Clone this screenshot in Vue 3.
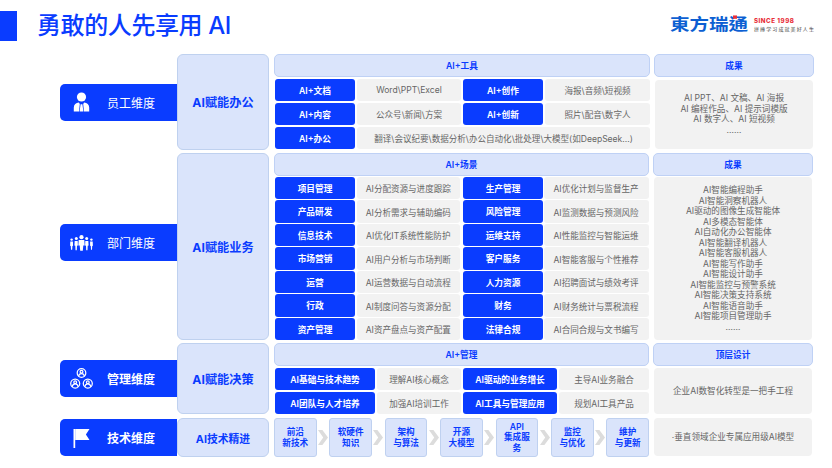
<script setup>
const toolRows = [
  { cells: [['AI+文档', 'Word\\PPT\\Excel'], ['AI+创作', '海报\\音频\\短视频']] },
  { cells: [['AI+内容', '公众号\\新闻\\方案'], ['AI+创新', '照片\\配音\\数字人']] }
]
const sceneRows = [
  ['项目管理', 'AI分配资源与进度跟踪', '生产管理', 'AI优化计划与监督生产'],
  ['产品研发', 'AI分析需求与辅助编码', '风险管理', 'AI监测数据与预测风险'],
  ['信息技术', 'AI优化IT系统性能防护', '运维支持', 'AI性能监控与智能运维'],
  ['市场营销', 'AI用户分析与市场判断', '客户服务', 'AI智能客服与个性推荐'],
  ['运营', 'AI运营数据与自动流程', '人力资源', 'AI招聘面试与绩效考评'],
  ['行政', 'AI制度问答与资源分配', '财务', 'AI财务统计与票税流程'],
  ['资产管理', 'AI资产盘点与资产配置', '法律合规', 'AI合同合规与文书编写']
]
const sceneResults = ['AI智能编程助手', 'AI智能洞察机器人', 'AI驱动的图像生成智能体', 'AI多模态智能体', 'AI自动化办公智能体', 'AI智能翻译机器人', 'AI智能客服机器人', 'AI智能写作助手', 'AI智能设计助手', 'AI智能监控与预警系统', 'AI智能决策支持系统', 'AI智能语音助手', 'AI智能项目管理助手', '……']
const toolResults = ['AI PPT、AI 文稿、AI 海报', 'AI 编程作品、AI 提示词模版', 'AI 数字人、AI 短视频', '……']
const mgmtRows = [
  ['AI基础与技术趋势', '理解AI核心概念', 'AI驱动的业务增长', '主导AI业务融合'],
  ['AI团队与人才培养', '加强AI培训工作', 'AI工具与管理应用', '规划AI工具产品']
]
const steps = [['前沿', '新技术'], ['软硬件', '知识'], ['架构', '与算法'], ['开源', '大模型'], ['API', '集成服', '务'], ['监控', '与优化'], ['维护', '与更新']]
</script>

<template>
  <div class="page">
    <header class="top">
      <div class="mark"></div>
      <h1 class="title">勇敢的人先享用 AI</h1>
      <div class="logo">
        <span class="logo-name">東方瑞通<i class="logo-dot"></i></span>
        <div class="logo-side">
          <span class="since">SINCE 1998</span>
          <span class="slogan">拼搏学习成就美好人生</span>
        </div>
      </div>
    </header>

    <section class="row row-1">
      <div class="tab">
        <span class="tab-icon">
          <svg width="17" height="20" viewBox="0 0 17 20"><circle cx="8.5" cy="5" r="4.6" fill="#fff"/><path d="M0.8 19.5v-4c0-2.8 2.2-4.6 5-4.9l1 1.4-.8 7.5zM16.2 19.5v-4c0-2.8-2.2-4.6-5-4.9l-1 1.4.8 7.5zM7.6 12.2h1.8l1 7.3H6.6z" fill="#fff"/></svg>
        </span>
        <span>员工维度</span>
      </div>
      <div class="side">AI赋能办公</div>
      <div class="main">
        <div class="head">AI+工具</div>
        <div class="tool-grid">
          <template v-for="r in toolRows" :key="r.cells[0][0]">
            <template v-for="c in r.cells" :key="c[0]">
              <div class="blue">{{ c[0] }}</div>
              <div class="gray">{{ c[1] }}</div>
            </template>
          </template>
          <div class="blue">AI+办公</div>
          <div class="gray wide">翻译\会议纪要\数据分析\办公自动化\批处理\大模型(如DeepSeek...)</div>
        </div>
      </div>
      <div class="main result">
        <div class="head">成果</div>
        <div class="panel tool-panel">
          <div v-for="l in toolResults" :key="l">{{ l }}</div>
        </div>
      </div>
    </section>

    <section class="row row-2">
      <div class="tab tab-dept">
        <span class="tab-icon">
          <svg width="23" height="16" viewBox="0 0 23 16" fill="#fff">
            <circle cx="11.5" cy="2.2" r="2.1"/><path d="M8.7 5h5.6l.4 5.4h-1.4l-.5 5.4h-2.6l-.5-5.4H8.3z"/>
            <circle cx="6.3" cy="3.6" r="1.5"/><path d="M4.7 6h3l.2 4.6-.9.2-.2 4.4H5.5l-.2-4.4-.9-.2z"/>
            <circle cx="16.7" cy="3.6" r="1.5"/><path d="M15.3 6h3l.3 4.6-.9.2-.2 4.4h-1.3l-.2-4.4-.9-.2z"/>
            <circle cx="1.6" cy="4.6" r="1.2"/><path d="M.3 6.6h2.6l.2 4.2-.7.2-.2 3.8H1l-.2-3.8-.7-.2z"/>
            <circle cx="21.4" cy="4.6" r="1.2"/><path d="M20.1 6.6h2.6l.2 4.2-.7.2-.2 3.8h-1l-.2-3.8-.7-.2z"/>
          </svg>
        </span>
        <span>部门维度</span>
      </div>
      <div class="side">AI赋能业务</div>
      <div class="main">
        <div class="head">AI+场景</div>
        <div class="scene-grid">
          <template v-for="r in sceneRows" :key="r[0]">
            <div class="blue">{{ r[0] }}</div>
            <div class="gray">{{ r[1] }}</div>
            <div class="blue">{{ r[2] }}</div>
            <div class="gray">{{ r[3] }}</div>
          </template>
        </div>
      </div>
      <div class="main result">
        <div class="head">成果</div>
        <div class="panel scene-panel">
          <div v-for="l in sceneResults" :key="l">{{ l }}</div>
        </div>
      </div>
    </section>

    <section class="row row-3">
      <div class="tab strong">
        <span class="tab-icon">
          <svg width="23" height="21" viewBox="0 0 23 21" fill="none" stroke="#fff" stroke-width="1.25">
            <circle cx="11.5" cy="5" r="4.3"/><circle cx="11.5" cy="3.8" r="1.4"/><path d="M8.6 8.4c.2-2 1.4-2.8 2.9-2.8s2.7.8 2.9 2.8"/>
            <circle cx="5.2" cy="15.5" r="4.5"/><circle cx="5.2" cy="14.2" r="1.4"/><path d="M2.2 19c.2-2.2 1.5-3.2 3-3.2s2.8 1 3 3.2"/>
            <circle cx="17.8" cy="15.5" r="4.5"/><circle cx="17.8" cy="14.2" r="1.4"/><path d="M14.8 19c.2-2.2 1.5-3.2 3-3.2s2.8 1 3 3.2"/>
          </svg>
        </span>
        <span>管理维度</span>
      </div>
      <div class="side">AI赋能决策</div>
      <div class="main">
        <div class="head">AI+管理</div>
        <div class="mgmt-grid">
          <template v-for="r in mgmtRows" :key="r[0]">
            <div class="blue">{{ r[0] }}</div>
            <div class="gray">{{ r[1] }}</div>
            <div class="blue">{{ r[2] }}</div>
            <div class="gray">{{ r[3] }}</div>
          </template>
        </div>
      </div>
      <div class="main result">
        <div class="head">顶层设计</div>
        <div class="panel mgmt-panel">企业AI数智化转型是一把手工程</div>
      </div>
    </section>

    <section class="row row-4">
      <div class="tab strong">
        <span class="tab-icon">
          <svg width="17" height="20" viewBox="0 0 17 20" fill="#fff"><rect x="0.5" y="1" width="1.7" height="19"/><path d="M2.2 1H16.5l-3.6 5.4 3.6 5.6H2.2z"/></svg>
        </span>
        <span>技术维度</span>
      </div>
      <div class="side side-small">AI技术精进</div>
      <div class="steps">
        <template v-for="(s, i) in steps" :key="s[0]">
          <svg v-if="i" class="chev" width="10" height="15" viewBox="0 0 10 15"><path d="M0 0h4.4L10 7.5 4.4 15H0l5.2-7.5z" fill="#dcdcdc"/></svg>
          <div class="step"><div v-for="l in s" :key="l">{{ l }}</div></div>
        </template>
      </div>
      <div class="panel tech-panel">·垂直领域企业专属应用级AI模型</div>
    </section>
  </div>
</template>

<style scoped>
.page {
  width: 832px;
  height: 468px;
  overflow: hidden;
  background: #fff;
  font-family: Inter, "Noto Sans CJK SC", sans-serif;
}
.top {
  height: 54px;
  display: flex;
  align-items: flex-start;
}
.mark {
  width: 17px;
  height: 30px;
  margin-top: 11px;
  background: #0a3cff;
}
.title {
  margin: 9px 0 0 20px;
  font-size: 24px;
  line-height: 34px;
  font-weight: 500;
  color: #0a3cff;
  letter-spacing: -0.4px;
}
.logo {
  margin-left: auto;
  margin-right: 17px;
  margin-top: 12px;
  display: flex;
  align-items: center;
  gap: 6px;
}
.logo-name {
  position: relative;
  display: block;
  font-family: "Noto Sans CJK TC", sans-serif;
  font-size: 19.5px;
  line-height: 22px;
  font-weight: 700;
  color: #0c5fd2;
  transform: scaleY(0.84);
}
.logo-dot {
  position: absolute;
  left: 63px;
  top: 2px;
  width: 4px;
  height: 4px;
  background: #e8303a;
}
.logo-side {
  display: flex;
  flex-direction: column;
  gap: 2px;
  padding-top: 3px;
}
.since {
  font-size: 6.2px;
  line-height: 6px;
  font-weight: 800;
  letter-spacing: 0.5px;
  color: #e8303a;
}
.slogan {
  font-size: 5px;
  line-height: 6px;
  letter-spacing: 1.1px;
  color: #444;
}
.row {
  display: grid;
  grid-template-columns: 117px 92px 1fr 160px;
  width: 753px;
  margin-left: 60px;
}
.row-1 { height: 96px; margin-bottom: 3px; }
.row-2 { height: 187px; margin-bottom: 3px; }
.row-3 { height: 71px; margin-bottom: 4px; }
.row-4 { height: 39px; }
.tab {
  align-self: center;
  height: 37px;
  display: flex;
  align-items: center;
  background: #0a3cff;
  border-radius: 5px 0 0 5px;
  color: #fff;
  font-size: 12px;
}
.tab-dept { margin-bottom: 8px; }
.strong { font-weight: 700; }
.tab-icon {
  width: 47px;
  flex: none;
  display: flex;
  justify-content: center;
  padding-right: 5px;
  box-sizing: border-box;
}
.side {
  box-sizing: border-box;
  display: flex;
  align-items: center;
  justify-content: center;
  background: #dae4fb;
  border: 1px solid #bfd1ef;
  border-radius: 6px;
  color: #0a3cff;
  font-size: 12.2px;
  font-weight: 700;
}
.side-small { font-size: 10.8px; }
.main {
  margin-left: 5px;
  margin-right: 4px;
  display: flex;
  flex-direction: column;
}
.result {
  margin: 0;
}
.head {
  box-sizing: border-box;
  height: 23px;
  flex: none;
  display: flex;
  align-items: center;
  justify-content: center;
  background: #dae4fb;
  border: 1px solid #bfd1f5;
  border-radius: 5px;
  color: #0a3cff;
  font-size: 8.7px;
  font-weight: 600;
}
.blue, .gray {
  display: flex;
  align-items: center;
  justify-content: center;
  white-space: nowrap;
  border-radius: 3px;
}
.blue {
  background: #0a3cff;
  color: #fff;
  font-size: 8.7px;
  font-weight: 600;
}
.gray {
  background: #f2f2f2;
  color: #666;
  font-size: 8.55px;
}
.wide { grid-column: 2 / 5; }
.tool-grid, .scene-grid, .mgmt-grid {
  display: grid;
  margin: 2.3px 0 0 1px;
  column-gap: 2px;
}
.tool-grid {
  grid-template-columns: 80px 104px 80px 105px;
  grid-auto-rows: 22px;
  row-gap: 2px;
}
.scene-grid {
  grid-template-columns: 80px 102.5px 80px 105px;
  grid-auto-rows: 22.3px;
  row-gap: 1.2px;
  margin-top: 1px;
}
.scene-grid .blue:nth-child(4n + 3) { margin-left: 1.5px; margin-right: -1.5px; }
.mgmt-grid {
  grid-template-columns: 100px 84px 94px 90px;
  grid-auto-rows: 22.3px;
  row-gap: 1.6px;
  margin-top: 2px;
}
.panel {
  box-sizing: border-box;
  margin: 0 1px;
  background: #f2f2f2;
  border-radius: 4px;
  color: #666;
  font-size: 8.6px;
  line-height: 10.5px;
  text-align: center;
  display: flex;
  flex-direction: column;
  justify-content: center;
}
.tool-panel { margin-top: 2.5px; height: 69px; }
.scene-panel { margin-top: 1px; height: 163px; }
.mgmt-panel { margin-top: 2px; height: 46px; }
.tech-panel { height: 38px; }
.steps {
  margin-left: 5px;
  margin-right: 4px;
  display: flex;
  align-items: center;
  justify-content: space-between;
}
.step {
  box-sizing: border-box;
  width: 42.5px;
  height: 39px;
  display: flex;
  flex-direction: column;
  align-items: center;
  justify-content: center;
  background: #dae4fb;
  border: 1px solid #bfd1f0;
  border-radius: 3px;
  color: #0a3cff;
  font-size: 8.6px;
  line-height: 10.5px;
  font-weight: 600;
}
.chev { flex: none; }
</style>
